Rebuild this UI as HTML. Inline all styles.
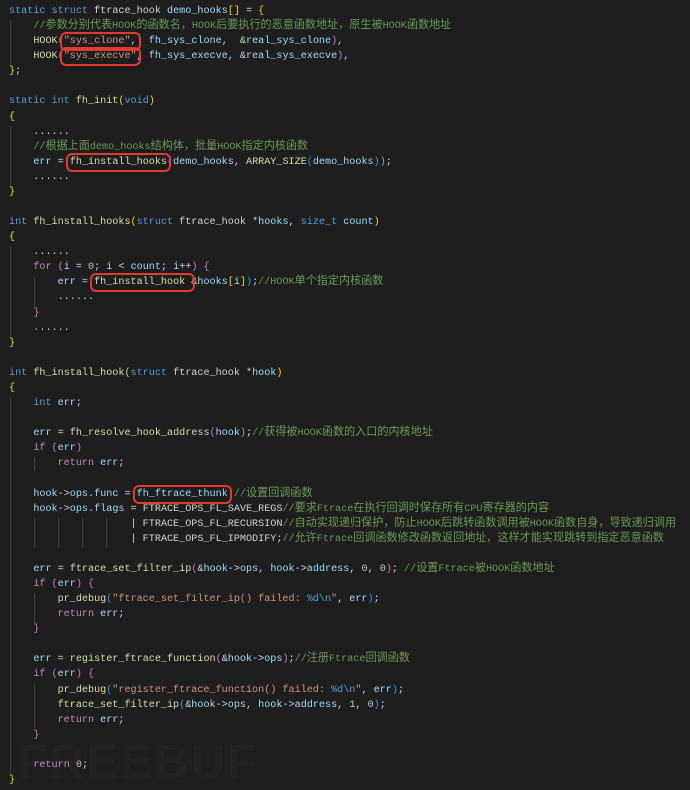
<!DOCTYPE html>
<html><head><meta charset="utf-8"><style>
html,body{margin:0;padding:0;background:#1e1e1e;width:690px;height:789px;overflow:hidden}
pre{margin:0;position:absolute;left:9px;top:4px;font-family:"Liberation Mono","Noto Sans CJK SC",monospace;font-size:10.15px;line-height:15.08px;color:#d4d4d4;white-space:pre}
pre span{line-height:10px}
.k{color:#569cd6}.c{color:#c586c0}.f{color:#dcdcaa}.v{color:#9cdcfe}.s{color:#ce9178}.g{color:#6a9955}.n{color:#b5cea8}
.b1{color:#ffd700}.b2{color:#da70d6}.b3{color:#179fff}
.z{font-size:11.1px;font-family:"Noto Sans CJK SC",sans-serif}
.r{outline:2px solid #e33a30;outline-offset:2px;border-radius:2px}
.gd{position:absolute;width:1px;background:#404040}
.wm{position:absolute;left:18px;top:735px;font:bold 48px "Liberation Sans",sans-serif;color:#232323;letter-spacing:2px}
</style></head><body>
<div class="wm">FREEBUF</div>
<div class="gd" style="left:10px;top:20px;height:46px"></div>
<div class="gd" style="left:10px;top:126px;height:60px"></div>
<div class="gd" style="left:10px;top:247px;height:91px"></div>
<div class="gd" style="left:34px;top:277px;height:30px"></div>
<div class="gd" style="left:10px;top:397px;height:378px"></div>
<div class="gd" style="left:34px;top:457px;height:14px"></div>
<div class="gd" style="left:34px;top:518px;height:30px"></div>
<div class="gd" style="left:58px;top:518px;height:30px"></div>
<div class="gd" style="left:82px;top:518px;height:30px"></div>
<div class="gd" style="left:106px;top:518px;height:30px"></div>
<div class="gd" style="left:34px;top:593px;height:30px"></div>
<div class="gd" style="left:34px;top:683px;height:45px"></div>
<pre><span class="k">static</span> <span class="k">struct</span> ftrace_hook <span class="v">demo_hooks</span><span class="b1">[]</span> = <span class="b1">{</span>
    <span class="g">//<span class="z">参数分别代表</span>HOOK<span class="z">的函数名，</span>HOOK<span class="z">后要执行的恶意函数地址，原生被</span>HOOK<span class="z">函数地址</span></span>
    <span class="f">HOOK</span><span class="b2">(</span><span class="r"><span class="s">"sys_clone"</span>,</span>  <span class="v">fh_sys_clone</span>,  &amp;<span class="v">real_sys_clone</span><span class="b2">)</span>,
    <span class="f">HOOK</span><span class="b2">(</span><span class="r"><span class="s">"sys_execve"</span></span>, <span class="v">fh_sys_execve</span>, &amp;<span class="v">real_sys_execve</span><span class="b2">)</span>,
<span class="b1">}</span>;

<span class="k">static</span> <span class="k">int</span> <span class="f">fh_init</span><span class="b1">(</span><span class="k">void</span><span class="b1">)</span>
<span class="b1">{</span>
    ......
    <span class="g">//<span class="z">根据上面</span>demo_hooks<span class="z">结构体，批量</span>HOOK<span class="z">指定内核函数</span></span>
    <span class="v">err</span> = <span class="r"><span class="f">fh_install_hooks</span></span><span class="b2">(</span><span class="v">demo_hooks</span>, <span class="f">ARRAY_SIZE</span><span class="b3">(</span><span class="v">demo_hooks</span><span class="b3">)</span><span class="b2">)</span>;
    ......
<span class="b1">}</span>

<span class="k">int</span> <span class="f">fh_install_hooks</span><span class="b1">(</span><span class="k">struct</span> ftrace_hook *<span class="v">hooks</span>, <span class="k">size_t</span> <span class="v">count</span><span class="b1">)</span>
<span class="b1">{</span>
    ......
    <span class="c">for</span> <span class="b2">(</span><span class="v">i</span> = <span class="n">0</span>; <span class="v">i</span> &lt; <span class="v">count</span>; <span class="v">i</span>++<span class="b2">)</span> <span class="b2">{</span>
        <span class="v">err</span> = <span class="r"><span class="f">fh_install_hook</span> </span>&amp;<span class="v">hooks</span><span class="b1">[</span><span class="v">i</span><span class="b1">]</span><span class="b3">)</span>;<span class="g">//HOOK<span class="z">单个指定内核函数</span></span>
        ......
    <span class="b2">}</span>
    ......
<span class="b1">}</span>

<span class="k">int</span> <span class="f">fh_install_hook</span><span class="b1">(</span><span class="k">struct</span> ftrace_hook *<span class="v">hook</span><span class="b1">)</span>
<span class="b1">{</span>
    <span class="k">int</span> <span class="v">err</span>;

    <span class="v">err</span> = <span class="f">fh_resolve_hook_address</span><span class="b2">(</span><span class="v">hook</span><span class="b2">)</span>;<span class="g">//<span class="z">获得被</span>HOOK<span class="z">函数的入口的内核地址</span></span>
    <span class="c">if</span> <span class="b2">(</span><span class="v">err</span><span class="b2">)</span>
        <span class="c">return</span> <span class="v">err</span>;

    <span class="v">hook</span>-&gt;<span class="v">ops</span>.<span class="v">func</span> = <span class="r"><span class="v">fh_ftrace_thunk</span></span> <span class="g">//<span class="z">设置回调函数</span></span>
    <span class="v">hook</span>-&gt;<span class="v">ops</span>.<span class="v">flags</span> = FTRACE_OPS_FL_SAVE_REGS<span class="g">//<span class="z">要求</span>Ftrace<span class="z">在执行回调时保存所有</span>CPU<span class="z">寄存器的内容</span></span>
                    | FTRACE_OPS_FL_RECURSION<span class="g">//<span class="z">自动实现递归保护，防止</span>HOOK<span class="z">后跳转函数调用被</span>HOOK<span class="z">函数自身，导致递归调用</span></span>
                    | FTRACE_OPS_FL_IPMODIFY;<span class="g">//<span class="z">允许</span>Ftrace<span class="z">回调函数修改函数返回地址，这样才能实现跳转到指定恶意函数</span></span>

    <span class="v">err</span> = <span class="f">ftrace_set_filter_ip</span><span class="b2">(</span>&amp;<span class="v">hook</span>-&gt;<span class="v">ops</span>, <span class="v">hook</span>-&gt;<span class="v">address</span>, <span class="n">0</span>, <span class="n">0</span><span class="b2">)</span>; <span class="g">//<span class="z">设置</span>Ftrace<span class="z">被</span>HOOK<span class="z">函数地址</span></span>
    <span class="c">if</span> <span class="b2">(</span><span class="v">err</span><span class="b2">)</span> <span class="b2">{</span>
        <span class="f">pr_debug</span><span class="b3">(</span><span class="s">"ftrace_set_filter_ip() failed: </span><span class="k">%d\n</span><span class="s">"</span>, <span class="v">err</span><span class="b3">)</span>;
        <span class="c">return</span> <span class="v">err</span>;
    <span class="b2">}</span>

    <span class="v">err</span> = <span class="f">register_ftrace_function</span><span class="b2">(</span>&amp;<span class="v">hook</span>-&gt;<span class="v">ops</span><span class="b2">)</span>;<span class="g">//<span class="z">注册</span>Ftrace<span class="z">回调函数</span></span>
    <span class="c">if</span> <span class="b2">(</span><span class="v">err</span><span class="b2">)</span> <span class="b2">{</span>
        <span class="f">pr_debug</span><span class="b3">(</span><span class="s">"register_ftrace_function() failed: </span><span class="k">%d\n</span><span class="s">"</span>, <span class="v">err</span><span class="b3">)</span>;
        <span class="f">ftrace_set_filter_ip</span><span class="b3">(</span>&amp;<span class="v">hook</span>-&gt;<span class="v">ops</span>, <span class="v">hook</span>-&gt;<span class="v">address</span>, <span class="n">1</span>, <span class="n">0</span><span class="b3">)</span>;
        <span class="c">return</span> <span class="v">err</span>;
    <span class="b2">}</span>

    <span class="c">return</span> <span class="n">0</span>;
<span class="b1">}</span></pre>
</body></html>
